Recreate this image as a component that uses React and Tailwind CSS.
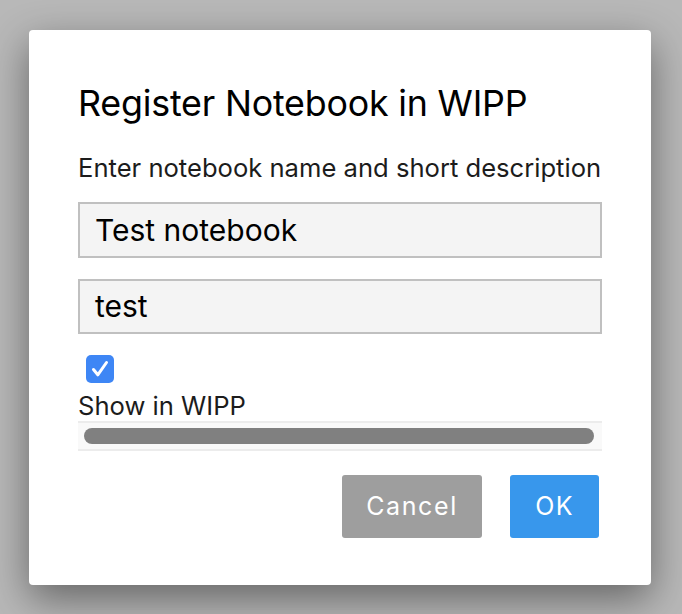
export default function App() {
  return (
    <div
      className="w-[682px] h-[614px] overflow-hidden bg-[#b8b8b8] pt-[30px] pl-[29px]"
      style={{ fontFamily: 'Inter, "Noto Sans", sans-serif' }}
    >
      <div className="w-[622px] h-[555px] bg-white rounded-[4px] shadow-[0_14px_40px_rgba(0,0,0,0.45)] pl-[49px] pr-[49px] pt-[51px] flex flex-col">
        {/* Title */}
        <h1 className="text-[35.8px] leading-[44px] text-black font-normal tracking-[-0.2px]">
          Register Notebook in WIPP
        </h1>

        {/* Subtitle */}
        <p className="mt-[28px] text-[25.6px] leading-[30px] text-[#1c1c1c]">
          Enter notebook name and short description
        </p>

        {/* Inputs */}
        <div className="mt-[19px] h-[56px] border-2 border-[#c0c0c0] bg-[#f4f4f4] flex items-center px-[15px] text-[30px] text-black">
          Test notebook
        </div>
        <div className="mt-[21px] h-[55px] border-2 border-[#c0c0c0] bg-[#f4f4f4] flex items-center px-[15px] text-[30px] text-black">
          test
        </div>

        {/* Checkbox */}
        <div className="mt-[21px] ml-[8px] w-[28px] h-[28px] rounded-[5px] bg-[#3e86f5] flex items-center justify-center">
          <svg width="28" height="28" viewBox="0 0 28 28" fill="none">
            <path d="M7.5 14.5 L11.8 19.8 L20.5 7.5" stroke="white" strokeWidth="3" strokeLinecap="round" strokeLinejoin="round" />
          </svg>
        </div>
        <div className="mt-[8px] text-[25.6px] leading-[30px] text-[#1c1c1c]">Show in WIPP</div>

        {/* Scrollbar */}
        <div className="h-[30px] border-y-2 border-[#ececec] bg-[#f9f9f9] flex items-center pl-[6px] pr-[8px]">
          <div className="h-[16px] w-full rounded-full bg-[#808080]" />
        </div>

        {/* Buttons */}
        <div className="mt-[24px] flex justify-end gap-[28px] pr-[3px]">
          <button className="w-[140px] h-[63px] rounded-[3px] bg-[#9e9e9e] text-white text-[25px] tracking-[1.6px]">
            Cancel
          </button>
          <button className="w-[89px] h-[63px] rounded-[3px] bg-[#3897ec] text-white text-[25px] tracking-[1.4px]">
            OK
          </button>
        </div>
      </div>
    </div>
  )
}
